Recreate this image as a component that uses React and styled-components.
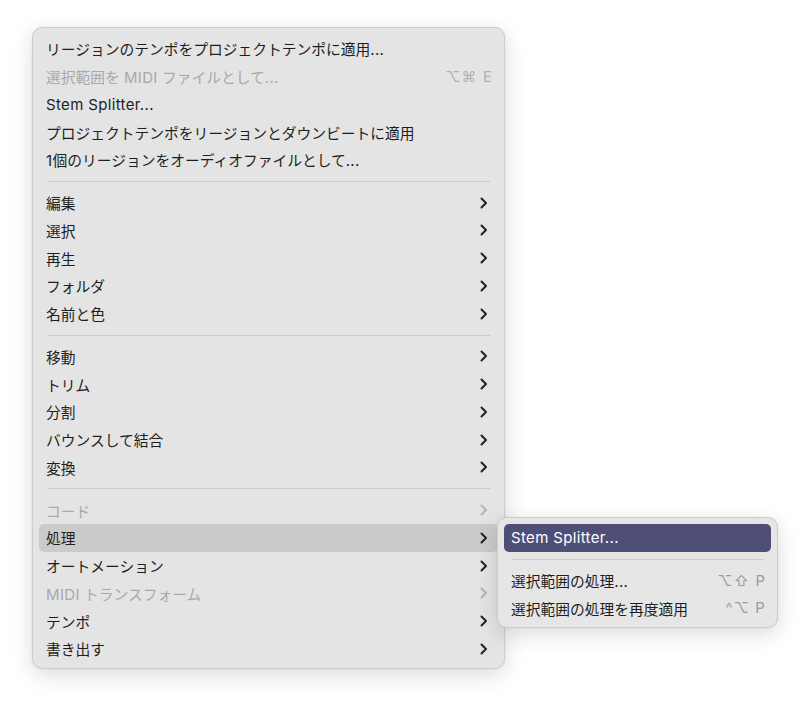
import React from "react";
import styled, { createGlobalStyle } from "styled-components";

const Global = createGlobalStyle`
  html, body { margin: 0; padding: 0; background: #ffffff; }
  body {
    font-family: Inter, "Noto Sans CJK JP", "Noto Sans", sans-serif;
    -webkit-font-smoothing: antialiased;
  }
`;

const Page = styled.div`
  position: relative;
  width: 810px;
  height: 707px;
  padding: 27px 0 0 32px;
  box-sizing: border-box;
`;

const Menu = styled.div`
  box-sizing: border-box;
  width: ${(p) => p.$w}px;
  padding: 7px 6px 5px 6px;
  background: #e4e4e4;
  border: 1px solid #cdcdcd;
  border-radius: 10px;
  box-shadow: 0 6px 22px rgba(0, 0, 0, 0.14), 0 0 2px rgba(0, 0, 0, 0.08);
  display: flex;
  flex-direction: column;
`;

const SubMenu = styled(Menu)`
  position: absolute;
  left: 497px;
  top: 517px;
  padding: 6px 6px 5px 6px;
  background: #e6e6e6;
`;

const Row = styled.div`
  height: 27.75px;
  display: flex;
  align-items: center;
  padding: 0 8px 0 7px;
  border-radius: 5px;
  font-size: 14.75px;
  color: ${(p) =>
    p.$active ? "#ffffff" : p.$disabled ? "#a9a9a9" : "#1e1e1e"};
  background: ${(p) =>
    p.$active ? "#4f4e76" : p.$hover ? "#cbcbcb" : "transparent"};
  white-space: nowrap;
`;

const Label = styled.span`
  flex: 1;
`;

const Latin = styled.span`
  font-size: 15px;
  letter-spacing: 0.35px;
`;

const Shortcut = styled.span`
  color: ${(p) => (p.$disabled ? "#b0b0b0" : "#9c9c9c")};
  font-size: 14.75px;
  letter-spacing: 1.2px;
  margin-right: -3px;
`;

const Sep = styled.div`
  height: 15px;
  display: flex;
  align-items: center;
  padding: 0 8px;
  &::after {
    content: "";
    flex: 1;
    height: 1px;
    background: #cacaca;
  }
`;

const ChevronBox = styled.span`
  display: flex;
  align-items: center;
  margin-right: 2px;
  color: ${(p) => (p.$disabled ? "#b4b4b4" : "#222222")};
`;

const Chevron = ({ disabled }) => (
  <ChevronBox $disabled={disabled}>
    <svg width="8" height="12" viewBox="0 0 8 12">
      <path
        d="M1.5 1.5 L6 6 L1.5 10.5"
        fill="none"
        stroke="currentColor"
        strokeWidth="2"
        strokeLinecap="round"
        strokeLinejoin="round"
      />
    </svg>
  </ChevronBox>
);

const Text = ({ children }) => {
  const parts = children.split(/([A-Za-z0-9.][A-Za-z0-9. ]*[A-Za-z0-9.]|[A-Za-z0-9.])/);
  return (
    <Label>
      {parts.map((p, i) =>
        i % 2 === 1 ? <Latin key={i}>{p}</Latin> : <React.Fragment key={i}>{p}</React.Fragment>
      )}
    </Label>
  );
};

const groups = [
  [
    { t: "リージョンのテンポをプロジェクトテンポに適用..." },
    { t: "選択範囲を MIDI ファイルとして...", d: true, s: "⌥⌘ E" },
    { t: "Stem Splitter..." },
    { t: "プロジェクトテンポをリージョンとダウンビートに適用" },
    { t: "1個のリージョンをオーディオファイルとして..." },
  ],
  [
    { t: "編集", c: true },
    { t: "選択", c: true },
    { t: "再生", c: true },
    { t: "フォルダ", c: true },
    { t: "名前と色", c: true },
  ],
  [
    { t: "移動", c: true },
    { t: "トリム", c: true },
    { t: "分割", c: true },
    { t: "バウンスして結合", c: true },
    { t: "変換", c: true },
  ],
  [
    { t: "コード", c: true, d: true },
    { t: "処理", c: true, h: true },
    { t: "オートメーション", c: true },
    { t: "MIDI トランスフォーム", c: true, d: true },
    { t: "テンポ", c: true },
    { t: "書き出す", c: true },
  ],
];

export default function App() {
  return (
    <>
      <Global />
      <Page>
        <Menu $w={473}>
          {groups.map((g, gi) => (
            <React.Fragment key={gi}>
              {gi > 0 && <Sep />}
              {g.map((it) => (
                <Row key={it.t} $disabled={it.d} $hover={it.h}>
                  <Text>{it.t}</Text>
                  {it.s && <Shortcut $disabled={it.d}>{it.s}</Shortcut>}
                  {it.c && <Chevron disabled={it.d} />}
                </Row>
              ))}
            </React.Fragment>
          ))}
        </Menu>
        <SubMenu $w={281}>
          <Row $active>
            <Text>Stem Splitter...</Text>
          </Row>
          <Sep />
          <Row>
            <Text>選択範囲の処理...</Text>
            <Shortcut>⌥⇧ P</Shortcut>
          </Row>
          <Row>
            <Text>選択範囲の処理を再度適用</Text>
            <Shortcut>^⌥ P</Shortcut>
          </Row>
        </SubMenu>
      </Page>
    </>
  );
}
